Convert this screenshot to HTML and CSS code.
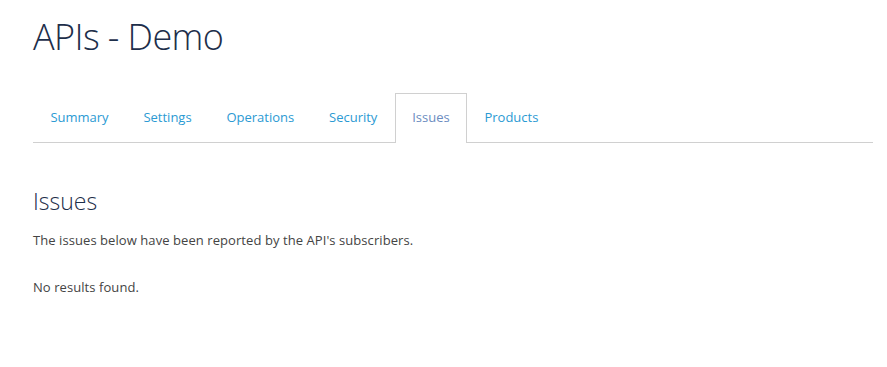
FILE: index.html
```html
<!DOCTYPE html>
<html lang="en">
<head>
  <meta charset="UTF-8" />
  <title>APIs - Demo</title>
  <link rel="stylesheet" href="styles.css">
</head>
<body>
  <main class="page">
    <h1 class="page-title">APIs - Demo</h1>

    <nav class="tabs" aria-label="API sections">
      <a class="tab" href="#">Summary</a>
      <a class="tab" href="#">Settings</a>
      <a class="tab" href="#">Operations</a>
      <a class="tab" href="#">Security</a>
      <a class="tab active" href="#">Issues</a>
      <a class="tab" href="#">Products</a>
    </nav>

    <section class="panel">
      <h2 class="panel-title">Issues</h2>
      <p class="panel-text">The issues below have been reported by the API's subscribers.</p>
      <p class="panel-text">No results found.</p>
    </section>
  </main>
</body>
</html>
```

FILE: styles.css
```css
:root {
  --link: #2b9ad3; --active: #6b8cc0; --title: #1d2e4a; --text: #444;
  --border: #d0d0d0; --bg: #fff;
}
body { margin: 0; background: var(--bg); font-family: "Open Sans", sans-serif; color: var(--text); }
.page { width: 840px; padding: 12px 0 0 33px; }
.page-title { margin: 0; font-size: 36px; font-weight: 300; color: var(--title); line-height: 50px; letter-spacing: -0.6px; }
.tabs { display: flex; margin-top: 31px; border-bottom: 1px solid var(--border); }
.tab { display: block; padding: 0 16.4px; height: 47px; line-height: 46px; border: 1px solid transparent; border-bottom: 0;
  font-size: 13px; color: var(--link); text-decoration: none; margin-bottom: -1px; }
.tab.active { border-color: var(--border); background: var(--bg); color: var(--active); height: 49px; }
/* Issues panel */
.panel { padding-top: 44px; }
.panel-title { margin: 0; font-size: 23px; font-weight: 300; color: var(--title); line-height: 28px; }
.panel-text { margin: 16px 0 0; font-size: 13px; line-height: 18px; letter-spacing: 0.07px; }
.panel-text + .panel-text { margin-top: 29px; }
```
